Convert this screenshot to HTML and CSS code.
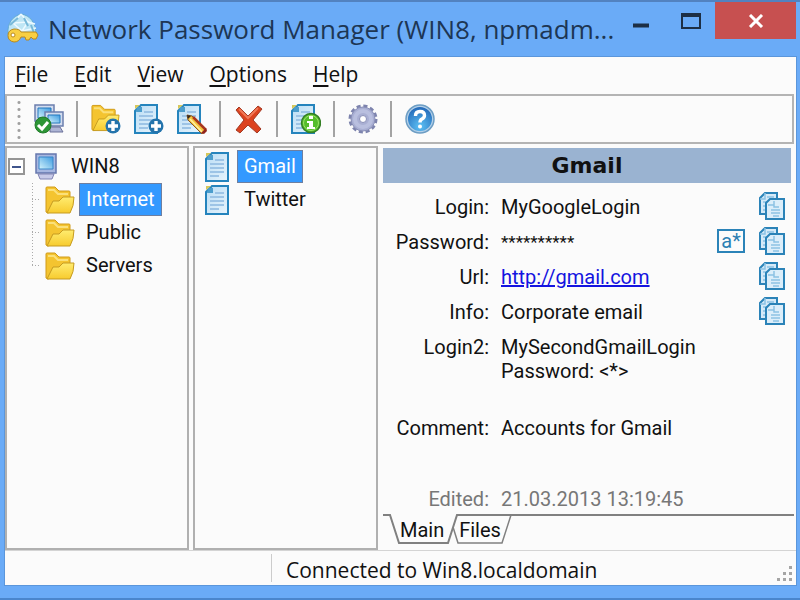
FILE: index.html
```
<!DOCTYPE html>
<html lang="en">
<head>
    <meta charset="UTF-8">
    <title>Network Password Manager</title>
    <link rel="stylesheet" href="styles.css">
</head>
<body>
<svg class="defs" aria-hidden="true">
    <defs>
        <linearGradient id="gold" x1="0" y1="0" x2="0" y2="1">
            <stop offset="0" stop-color="#ffec70"/>
            <stop offset="1" stop-color="#f7cb2e"/>
        </linearGradient>
        <linearGradient id="screen" x1="0" y1="1" x2="1" y2="0">
            <stop offset="0" stop-color="#d4f3fc"/>
            <stop offset="1" stop-color="#3d9be0"/>
        </linearGradient>
        <linearGradient id="sheet" x1="0" y1="0" x2="1" y2="1">
            <stop offset="0" stop-color="#b9ddf5"/>
            <stop offset="1" stop-color="#e8f4fc"/>
        </linearGradient>
        <radialGradient id="ball" cx=".5" cy=".8" r=".8">
            <stop offset="0" stop-color="#5cc1f5"/>
            <stop offset="1" stop-color="#2368b8"/>
        </radialGradient>
    </defs>
    <symbol id="folder" viewBox="0 0 30 28">
        <path d="M1 26V2q0-1 1-1h8l4 4h10q1 0 1 1v14L3 27z" fill="#f4c430" stroke="#d09a18"/>
        <path d="M3 4h6l4 4h10" fill="none" stroke="#fbe079" stroke-width="2"/>
        <path d="M2 27l6-12h6l4-4h11q0 9-4 16z" fill="url(#gold)" stroke="#c69b20"/>
    </symbol>
    <symbol id="doc" viewBox="0 0 24 30">
        <path d="M7 1h16v28H1V7z" fill="url(#sheet)" stroke="#2584bd" stroke-width="2"/>
        <path d="M3 3h5v5H2z" fill="#4b9dcc"/>
        <path d="M1 5V1h5z" fill="#d6c75a"/>
        <path d="M10 8h9M5 12h14M5 16h14M5 20h14M5 24h9" stroke="#9dc4e6" stroke-width="2"/>
    </symbol>
    <symbol id="plus" viewBox="0 0 16 16">
        <circle cx="8" cy="8" r="7.5" fill="#2474ac"/>
        <path d="M8 3v10M3 8h10" stroke="#fff" stroke-width="3.4"/>
    </symbol>
    <symbol id="copy" viewBox="0 0 26 28">
        <path d="M6 1h12v21H1V6z" fill="#d6eaf8" stroke="#2b83b8" stroke-width="2"/>
        <path d="M6 1v6H1M8 5h7M4 10h5M4 14h4M4 18h4" fill="none" stroke="#8cc2e4" stroke-width="1.5"/>
        <path d="M11 7h14v20H7V11z" fill="#dceefa" stroke="#2b83b8" stroke-width="2"/>
        <path d="M9 13h6V9M15 11v4h5M12 18h9M12 21h9M14 24h6" fill="none" stroke="#8cc2e4" stroke-width="1.5"/>
    </symbol>
</svg>

<div class="window">
    <header class="titlebar">
        <svg class="app-icon" viewBox="0 0 32 30" aria-hidden="true">
            <path d="M1 21C0 10 6 3 14 1c9 1 15 9 15 20z" fill="#bfe6f5" stroke="#62aad4"/>
            <path d="M14 1l-8 9 9 8L29 15M14 1l7 8 7 2M6 10l15-1-6 9" fill="none" stroke="#eefaff" stroke-width="1.5"/>
            <path d="M3 12l8-7M17 5l4 8M24 12l3 8" stroke="#78b9d9" stroke-width="2"/>
            <path d="M7 16q6 0 7 3h15l2 3-2 4h-3l-2-2-2 3h-3l-1-3h-4q-2 5-7 5-6-1-6-6.500T7 16z" fill="#f8cf43" stroke="#b98a1e"/>
            <circle cx="6" cy="22" r="2" fill="#fff" stroke="#b98a1e"/>
        </svg>
        <h1>Network Password Manager (WIN8, npmadm...</h1>
        <div class="controls">
            <button type="button" class="minimize" aria-label="Minimize">
                <svg width="16" height="5"><path d="M0 2.500h16" stroke="#1d2f45" stroke-width="4"/></svg>
            </button>
            <button type="button" class="maximize" aria-label="Maximize">
                <svg width="20" height="16"><path d="M1 1h18v14H1z" fill="none" stroke="#1d2f45" stroke-width="2"/><path d="M0 2h20" stroke="#1d2f45" stroke-width="4"/></svg>
            </button>
            <button type="button" class="close" aria-label="Close">
                <svg width="16" height="14"><path d="M2 1l12 12M14 1L2 13" stroke="#fff" stroke-width="3"/></svg>
            </button>
        </div>
    </header>

    <div class="client">
        <nav class="menu">
            <button type="button"><u>F</u>ile</button>
            <button type="button"><u>E</u>dit</button>
            <button type="button"><u>V</u>iew</button>
            <button type="button"><u>O</u>ptions</button>
            <button type="button"><u>H</u>elp</button>
        </nav>

        <div class="toolbar">
            <span class="handle"></span>
            <button type="button" aria-label="Connect">
                <svg viewBox="0 0 30 30">
                    <path d="M1 1h19v16H1z" fill="#d3dcee" stroke="#6c7fae" stroke-width="1.5"/>
                    <path d="M4 4h13v10H4z" fill="url(#screen)" stroke="#2578bd"/>
                    <path d="M11 8h18v14H11z" fill="#d3dcee" stroke="#6c7fae" stroke-width="1.5"/>
                    <path d="M14 11h12v8H14z" fill="url(#screen)" stroke="#2578bd"/>
                    <path d="M16 23h10l3 5H16z" fill="#aeb5d5" stroke="#6a7199"/>
                    <circle cx="9" cy="21" r="8" fill="#2d9636" stroke="#217b2a"/>
                    <path d="M4 21l4 4 6-7" fill="none" stroke="#fff" stroke-width="3"/>
                </svg>
            </button>
            <span class="separator"></span>
            <button type="button" aria-label="New folder">
                <svg viewBox="0 0 30 30"><use href="#folder" width="29" height="28"/><use href="#plus" x="14" y="14" width="16" height="16"/></svg>
            </button>
            <button type="button" aria-label="New account">
                <svg viewBox="0 0 30 30"><use href="#doc" width="24" height="30"/><use href="#plus" x="14" y="14" width="16" height="16"/></svg>
            </button>
            <button type="button" aria-label="Edit">
                <svg viewBox="0 0 30 30">
                    <use href="#doc" width="24" height="30"/>
                    <path d="M10 11l5 1 14 14-4 4-14-14z" fill="#f5c53c" stroke="#8b5620"/>
                    <path d="M13 15l13 14" stroke="#fff0a0" stroke-width="1.5"/>
                    <path d="M16 13l13 13" stroke="#a93820" stroke-width="2.500"/>
                    <path d="M10 11l4 1-3 3z" fill="#352a22"/>
                    <path d="M24 29l5-5 1 3-3 3z" fill="#93251b"/>
                </svg>
            </button>
            <span class="separator"></span>
            <button type="button" aria-label="Delete">
                <svg viewBox="0 0 30 30">
                    <path d="M5 3l9 9 10-10 4 3-9 11 8 9-4 4-9-8-8 8-4-3 8-10L2 6z" fill="#dc4320" stroke="#a23a24"/>
                    <path d="M5 5l9 9L24 4" fill="none" stroke="#f07a58" stroke-width="2"/>
                </svg>
            </button>
            <span class="separator"></span>
            <button type="button" aria-label="Properties">
                <svg viewBox="0 0 30 30">
                    <use href="#doc" width="24" height="30"/>
                    <circle cx="20" cy="19" r="9.500" fill="#55bd2b" stroke="#347f24" stroke-width="1.5"/>
                    <circle cx="20" cy="19" r="7.500" fill="none" stroke="#9be267"/>
                    <path d="M18 12h4v3h-4zM16 17h6v6h2v2h-8v-2h2v-4h-2z" fill="#fff"/>
                </svg>
            </button>
            <span class="separator"></span>
            <button type="button" aria-label="Settings">
                <svg viewBox="0 0 30 30">
                    <circle cx="15" cy="15" r="12.500" fill="none" stroke="#7d83ad" stroke-width="4" stroke-dasharray="3.900 2.640"/>
                    <circle cx="15" cy="15" r="12" fill="#a9afd3" stroke="#8a90b8"/>
                    <circle cx="15" cy="15" r="8" fill="none" stroke="#b9bfdf" stroke-width="4"/>
                    <circle cx="15" cy="15" r="3.500" fill="#fff" stroke="#8a90b8"/>
                </svg>
            </button>
            <span class="separator"></span>
            <button type="button" aria-label="Help">
                <svg viewBox="0 0 30 30">
                    <circle cx="15" cy="15" r="14" fill="#b4d0e8" stroke="#6c9dc4" stroke-width="1.5"/>
                    <circle cx="15" cy="15" r="12" fill="url(#ball)"/>
                    <path d="M10.500 12q0-4.500 4.500-4.500t4.500 4q0 2-2.500 3.500-2 1-2 3.500" fill="none" stroke="#fff" stroke-width="3.400"/>
                    <circle cx="15" cy="22.500" r="2" fill="#fff"/>
                </svg>
            </button>
        </div>

        <main class="panes">
            <div class="pane tree">
                <div class="root">
                    <button type="button" class="toggle" aria-label="Collapse"></button>
                    <svg class="computer" viewBox="0 0 24 27" aria-hidden="true">
                        <path d="M2 1h20v19H2z" fill="#a7b7e0" stroke="#6577ad" stroke-width="1.5"/>
                        <path d="M5 4h14v12H5z" fill="url(#screen)" stroke="#3886c9"/>
                        <path d="M4 21h16l-2 5H6z" fill="#c9cbe8" stroke="#8184b3"/>
                    </svg>
                    <span class="label">WIN8</span>
                </div>
                <ul>
                    <li><svg class="folder" aria-hidden="true"><use href="#folder"/></svg><span class="label selected">Internet</span></li>
                    <li><svg class="folder" aria-hidden="true"><use href="#folder"/></svg><span class="label">Public</span></li>
                    <li><svg class="folder" aria-hidden="true"><use href="#folder"/></svg><span class="label">Servers</span></li>
                </ul>
            </div>

            <ul class="pane accounts">
                <li><svg class="doc" aria-hidden="true"><use href="#doc"/></svg><span class="label selected">Gmail</span></li>
                <li><svg class="doc" aria-hidden="true"><use href="#doc"/></svg><span class="label">Twitter</span></li>
            </ul>

            <section class="details">
                <h2>Gmail</h2>
                <dl>
                    <div class="row">
                        <dt>Login:</dt>
                        <dd>MyGoogleLogin</dd>
                        <button type="button" aria-label="Copy login"><svg class="copy"><use href="#copy"/></svg></button>
                    </div>
                    <div class="row">
                        <dt>Password:</dt>
                        <dd class="stars">**********</dd>
                        <button type="button" class="reveal" aria-label="Show password">a*</button>
                        <button type="button" aria-label="Copy password"><svg class="copy"><use href="#copy"/></svg></button>
                    </div>
                    <div class="row">
                        <dt>Url:</dt>
                        <dd><a href="http://gmail.com">http://gmail.com</a></dd>
                        <button type="button" aria-label="Copy url"><svg class="copy"><use href="#copy"/></svg></button>
                    </div>
                    <div class="row">
                        <dt>Info:</dt>
                        <dd>Corporate email</dd>
                        <button type="button" aria-label="Copy info"><svg class="copy"><use href="#copy"/></svg></button>
                    </div>
                    <div class="row tall">
                        <dt>Login2:</dt>
                        <dd>MySecondGmailLogin<br>Password: &lt;*&gt;</dd>
                    </div>
                    <div class="row">
                        <dt>Comment:</dt>
                        <dd>Accounts for Gmail</dd>
                    </div>
                    <div class="row edited">
                        <dt>Edited:</dt>
                        <dd>21.03.2013 13:19:45</dd>
                    </div>
                </dl>
                <div class="tabs">
                    <svg class="outline" width="130" height="32" aria-hidden="true">
                        <path d="M0 1h7l9 28h49l9-28h56" fill="none" stroke="#808080" stroke-width="2"/>
                        <path d="M70 13l5 16h44l9-28" fill="none" stroke="#808080" stroke-width="1.5"/>
                    </svg>
                    <button type="button">Main</button>
                    <button type="button">Files</button>
                    <span class="line"></span>
                </div>
            </section>
        </main>

        <footer class="status">
            <span class="cell"></span>
            <span class="message">Connected to Win8.localdomain</span>
            <svg class="grip" width="16" height="16" aria-hidden="true">
                <path d="M12 0h3v3h-3zM6 6h3v3H6zM12 6h3v3h-3zM0 12h3v3H0zM6 12h3v3H6zM12 12h3v3h-3z" fill="#a5a5a5"/>
            </svg>
        </footer>
    </div>
</div>
</body>
</html>
```
FILE: styles.css
```
* {
    box-sizing: border-box;
}

body, h1, h2, ul, dl, dd {
    margin: 0;
    padding: 0;
}

ul {
    list-style: none;
}

body {
    font: 20px/24px Roboto, "Liberation Sans", sans-serif;
    color: #111;
}

button {
    padding: 0;
    border: none;
    background: none;
    font: inherit;
    color: inherit;
}

svg {
    display: block;
    flex: none;
}

.defs {
    position: absolute;
    width: 0;
    height: 0;
}

.window {
    display: flex;
    flex-direction: column;
    min-height: 100vh;
    padding: 0 4px 13px 5px;
    border-top: 2px solid #5282c0;
    border-bottom: 2px solid #4a86cd;
    background: #6aabf7;
}

/* title bar */
.titlebar {
    display: flex;
    height: 55px;
}

.app-icon {
    width: 32px;
    height: 30px;
    margin: 11px 0 0 2px;
}

.titlebar h1 {
    flex: 1;
    min-width: 0;
    margin-left: 9px;
    padding-top: 10px;
    font: 26px/34px "Open Sans", "Noto Sans", sans-serif;
    color: #1d3654;
    white-space: nowrap;
}

.controls {
    display: flex;
    height: 37px;
}

.controls button {
    display: flex;
    justify-content: center;
    align-items: center;
}

.controls .minimize {
    width: 52px;
    padding-top: 9px;
}

.controls .maximize {
    width: 48px;
}

.controls .close {
    width: 81px;
    background: #c75050;
}

.client {
    display: flex;
    flex: 1;
    flex-direction: column;
    background: #fbfbfb;
    outline: 1px solid #5b96db;
}

/* menu and toolbar */
.menu {
    display: flex;
    gap: 26px;
    height: 37px;
    padding: 2px 0 5px 10px;
    font: 21px/30px "Open Sans", "Noto Sans", sans-serif;
}

.menu u {
    text-decoration-thickness: 2px;
    text-underline-offset: 3px;
}

.toolbar {
    display: flex;
    align-items: center;
    height: 50px;
    margin-right: 2px;
    padding-left: 10px;
    border: 2px solid #b4b4b4;
}

.toolbar svg {
    width: 30px;
    height: 30px;
}

.toolbar button + button {
    margin-left: 13px;
}

.handle {
    width: 4px;
    height: 40px;
    margin-right: 13px;
    background: radial-gradient(circle, #a0a0a0 1px, transparent 2px) 0 0 / 4px 7px;
}

.separator {
    width: 2px;
    height: 36px;
    margin: 0 13px 0 12px;
    background: #a3a3a3;
}

/* panes */
.panes {
    display: flex;
    flex: 1;
    margin-top: 2px;
}

.pane {
    border: 2px solid #b0b0b0;
}

.tree {
    width: 184px;
    margin-right: 4px;
}

.accounts {
    width: 185px;
    padding: 2px 0 0 10px;
}

.label {
    padding: 0 6px;
    border: 1px solid transparent;
    line-height: 31px;
}

.selected {
    border-color: #6e7fa0;
    background: #3399ff;
    color: #fff;
}

.root,
.tree li,
.accounts li {
    display: flex;
    align-items: center;
    height: 33px;
}

.root {
    margin-top: 2px;
    padding-left: 1px;
}

.toggle {
    width: 17px;
    height: 17px;
    border: 2px solid #959595;
    background: linear-gradient(#40558c, #40558c) center / 9px 2px no-repeat #fff;
}

.computer {
    width: 24px;
    height: 27px;
    margin: 0 6px 0 9px;
}

.tree ul {
    padding-left: 25px;
}

.tree li {
    background: repeating-linear-gradient(#aaa 0 1px, transparent 1px 3px) 0 0 / 1px 100% no-repeat,
        repeating-linear-gradient(90deg, #aaa 0 1px, transparent 1px 3px) 0 center / 8px 1px no-repeat;
}

.tree li:last-child {
    background-size: 1px 50%, 8px 1px;
}

.folder {
    width: 30px;
    height: 28px;
    margin: 0 4px 0 13px;
}

.doc {
    width: 24px;
    height: 30px;
    margin-right: 8px;
}

/* account details */
.details {
    display: flex;
    flex: 1;
    flex-direction: column;
    min-width: 0;
    padding: 2px 2px 5px 5px;
}

.details h2 {
    height: 35px;
    margin-right: 3px;
    background: #9ab3d1;
    font: bold 22px/35px "DejaVu Sans", sans-serif;
    text-align: center;
}

.details dl {
    display: flex;
    flex: 1;
    flex-direction: column;
    padding-top: 7px;
}

.row {
    display: flex;
    gap: 12px;
    min-height: 35px;
    padding: 5px 9px 0 0;
}

.row dt {
    width: 106px;
    text-align: right;
}

.row dd {
    flex: 1;
}

.row .stars {
    font-size: 17px;
}

.row button {
    align-self: flex-start;
    margin-top: -3px;
}

.row .reveal {
    width: 28px;
    height: 24px;
    margin: -1px 2px 0 0;
    border: 2px solid #2b83b8;
    color: #2b7fb3;
    line-height: 20px;
}

.tall {
    min-height: 81px;
}

.row.edited {
    min-height: 32px;
    margin-top: auto;
    color: #777;
}

.copy {
    width: 26px;
    height: 28px;
}

a {
    color: #1414e0;
}

.tabs {
    display: flex;
    position: relative;
    height: 31px;
}

.tabs .outline {
    position: absolute;
    top: 0;
    left: 0;
}

.tabs button {
    position: relative;
    width: 42px;
    margin-left: 17px;
    line-height: 30px;
}

.tabs .line {
    flex: 1;
    height: 2px;
    margin-left: 10px;
    background: #808080;
}

/* status bar */
.status {
    display: flex;
    height: 35px;
    border-top: 1px solid #d4d4d4;
    font: 21px/38px "Open Sans", "Noto Sans", sans-serif;
}

.status .cell {
    width: 267px;
    margin: 3px 0;
    border-right: 1px solid #ccc;
}

.status .message {
    flex: 1;
    padding-left: 14px;
}

.grip {
    align-self: flex-end;
    margin: 0 3px 3px 0;
}
```
